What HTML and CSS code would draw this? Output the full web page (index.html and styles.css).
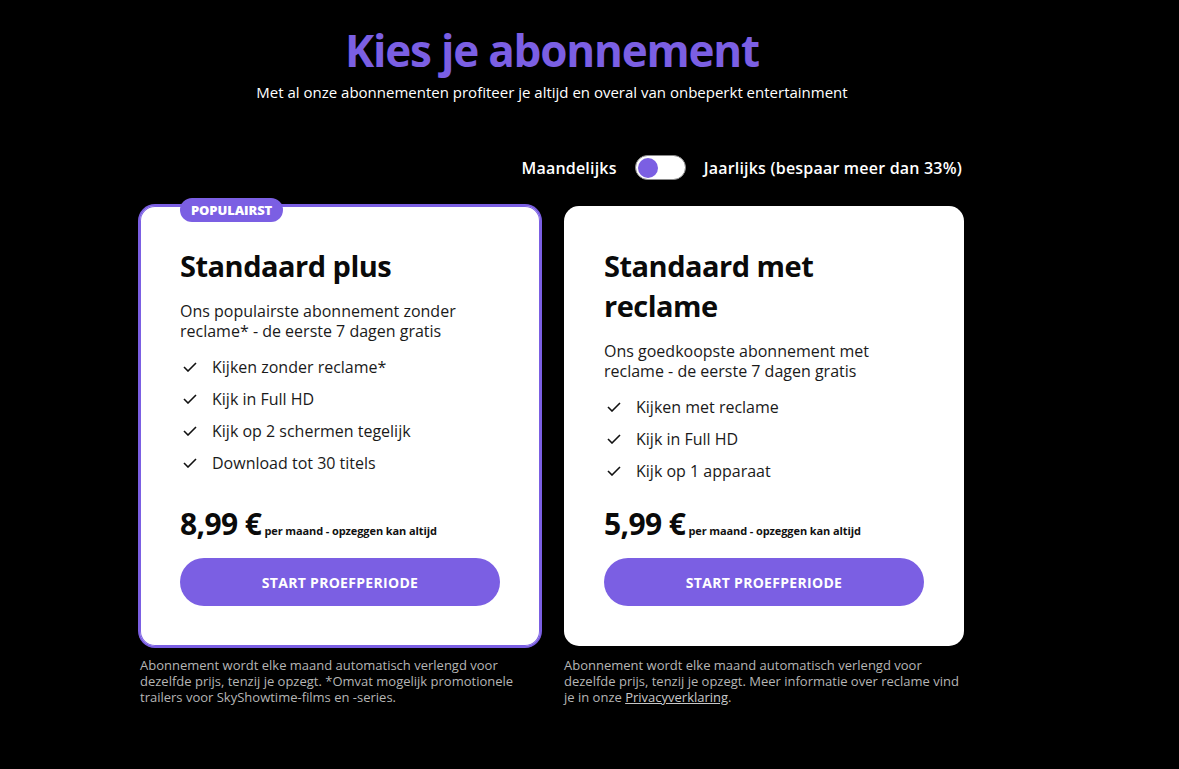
FILE: index.html
```html
<!DOCTYPE html>
<html lang="nl">
<head>
<meta charset="utf-8">
<title>Kies je abonnement</title>
<link rel="stylesheet" href="styles.css">
</head>
<body>
<main class="page">
  <header class="intro">
    <h1 class="title">Kies je abonnement</h1>
    <p class="subtitle">Met al onze abonnementen profiteer je altijd en overal van onbeperkt entertainment</p>
  </header>

  <div class="billing">
    <span class="billing__label">Maandelijks</span>
    <span class="switch" role="switch" aria-checked="false"><span class="switch__knob"></span></span>
    <span class="billing__label">Jaarlijks (bespaar meer dan 33%)</span>
  </div>

  <section class="plans">
    <div class="plan">
      <article class="card card--popular">
        <span class="badge">POPULAIRST</span>
        <h2 class="card__name">Standaard plus</h2>
        <p class="card__desc">Ons populairste abonnement zonder reclame* - de eerste 7 dagen gratis</p>
        <ul class="features">
          <li class="feature"><svg class="check" viewBox="0 0 14 10" width="14" height="10"><path d="M1 5l4 4 8-8" fill="none" stroke="#111" stroke-width="1.6"/></svg>Kijken zonder reclame*</li>
          <li class="feature"><svg class="check" viewBox="0 0 14 10" width="14" height="10"><path d="M1 5l4 4 8-8" fill="none" stroke="#111" stroke-width="1.6"/></svg>Kijk in Full HD</li>
          <li class="feature"><svg class="check" viewBox="0 0 14 10" width="14" height="10"><path d="M1 5l4 4 8-8" fill="none" stroke="#111" stroke-width="1.6"/></svg>Kijk op 2 schermen tegelijk</li>
          <li class="feature"><svg class="check" viewBox="0 0 14 10" width="14" height="10"><path d="M1 5l4 4 8-8" fill="none" stroke="#111" stroke-width="1.6"/></svg>Download tot 30 titels</li>
        </ul>
        <div class="price"><span class="price__amount">8,99 €</span><span class="price__note">per maand - opzeggen kan altijd</span></div>
        <button class="cta">START PROEFPERIODE</button>
      </article>
      <p class="note">Abonnement wordt elke maand automatisch verlengd voor dezelfde prijs, tenzij je opzegt. *Omvat mogelijk promotionele trailers voor SkyShowtime-films en -series.</p>
    </div>

    <div class="plan">
      <article class="card">
        <h2 class="card__name">Standaard met reclame</h2>
        <p class="card__desc">Ons goedkoopste abonnement met reclame - de eerste 7 dagen gratis</p>
        <ul class="features">
          <li class="feature"><svg class="check" viewBox="0 0 14 10" width="14" height="10"><path d="M1 5l4 4 8-8" fill="none" stroke="#111" stroke-width="1.6"/></svg>Kijken met reclame</li>
          <li class="feature"><svg class="check" viewBox="0 0 14 10" width="14" height="10"><path d="M1 5l4 4 8-8" fill="none" stroke="#111" stroke-width="1.6"/></svg>Kijk in Full HD</li>
          <li class="feature"><svg class="check" viewBox="0 0 14 10" width="14" height="10"><path d="M1 5l4 4 8-8" fill="none" stroke="#111" stroke-width="1.6"/></svg>Kijk op 1 apparaat</li>
        </ul>
        <div class="price"><span class="price__amount">5,99 €</span><span class="price__note">per maand - opzeggen kan altijd</span></div>
        <button class="cta">START PROEFPERIODE</button>
      </article>
      <p class="note">Abonnement wordt elke maand automatisch verlengd voor dezelfde prijs, tenzij je opzegt. Meer informatie over reclame vind je in onze <a class="note__link" href="#">Privacyverklaring</a>.</p>
    </div>
  </section>
</main>
</body>
</html>
```

FILE: styles.css
```css
* { box-sizing: border-box; }

html, body {
  margin: 0;
  padding: 0;
  background: #000;
}

body {
  font-family: "Open Sans", "Liberation Sans", sans-serif;
  color: #fff;
}

.page {
  width: 824px;
  margin-left: 140px;
  padding-top: 20px;
}

.intro {
  text-align: center;
}

.title {
  margin: 0;
  font-size: 44px;
  line-height: 60px;
  font-weight: 700;
  letter-spacing: -1.2px;
  color: #7b5fe3;
}

.subtitle {
  margin: 2px 0 0;
  font-size: 15px;
  line-height: 20px;
  color: #fff;
}

.billing {
  display: flex;
  justify-content: flex-end;
  align-items: center;
  gap: 18px;
  margin-top: 53px;
  padding-right: 2px;
}

.billing__label {
  font-size: 16px;
  font-weight: 600;
  line-height: 24px;
  letter-spacing: 0.2px;
}

.switch {
  display: flex;
  align-items: center;
  width: 51px;
  height: 25px;
  padding: 0 2px;
  background: #fff;
  border: 1px solid #8a8a8a;
  border-radius: 13px;
}

.switch__knob {
  width: 20px;
  height: 20px;
  border-radius: 50%;
  background: #7b5fe3;
}

.plans {
  display: grid;
  grid-template-columns: 400px 400px;
  gap: 24px;
  margin-top: 26px;
}

.plan {
  display: flex;
  flex-direction: column;
}

.card {
  position: relative;
  flex: 1;
  display: flex;
  flex-direction: column;
  padding: 40px 40px 40px;
  background: #fff;
  color: #111;
  border-radius: 15px;
}

.card--popular {
  box-shadow: 0 0 0 2px #7b5fe3, inset 0 0 0 1px #7b5fe3;
}

.badge {
  position: absolute;
  top: -8px;
  left: 40px;
  height: 24px;
  padding: 0 11px;
  border-radius: 12px;
  background: #7b5fe3;
  color: #fff;
  font-size: 13px;
  font-weight: 800;
  line-height: 24px;
  letter-spacing: -0.1px;
}

.card__name {
  margin: 0;
  font-size: 29px;
  line-height: 40px;
  font-weight: 700;
  letter-spacing: -0.5px;
  color: #0a0a0a;
}

.card__desc {
  margin: 15px 0 0;
  font-size: 16px;
  line-height: 20px;
  color: #1a1a1a;
}

.features {
  list-style: none;
  margin: 10px 0 0;
  padding: 0;
}

.feature {
  display: flex;
  align-items: center;
  height: 32px;
  font-size: 16px;
  color: #1a1a1a;
}

.check {
  flex: none;
  margin: 0 15px 0 3px;
}

.price {
  display: flex;
  align-items: baseline;
  margin-top: auto;
  padding-top: 19px;
  line-height: 36px;
}

.price__amount {
  font-size: 30px;
  font-weight: 700;
  letter-spacing: -0.6px;
  color: #0a0a0a;
}

.price__note {
  margin-left: 3px;
  font-size: 11px;
  font-weight: 700;
  letter-spacing: -0.1px;
  color: #111;
}

.cta {
  margin-top: 9px;
  width: 320px;
  height: 48px;
  border: 0;
  border-radius: 24px;
  background: #7b5fe3;
  color: #fff;
  font-family: inherit;
  font-size: 14px;
  font-weight: 700;
  letter-spacing: 0.3px;
  cursor: pointer;
}

.note {
  margin: 11px 0 0;
  font-size: 13px;
  line-height: 16px;
  color: #b5b5b5;
}

.note__link {
  color: #c8c8c8;
  text-decoration: underline;
  line-height: 16px;
}
```
